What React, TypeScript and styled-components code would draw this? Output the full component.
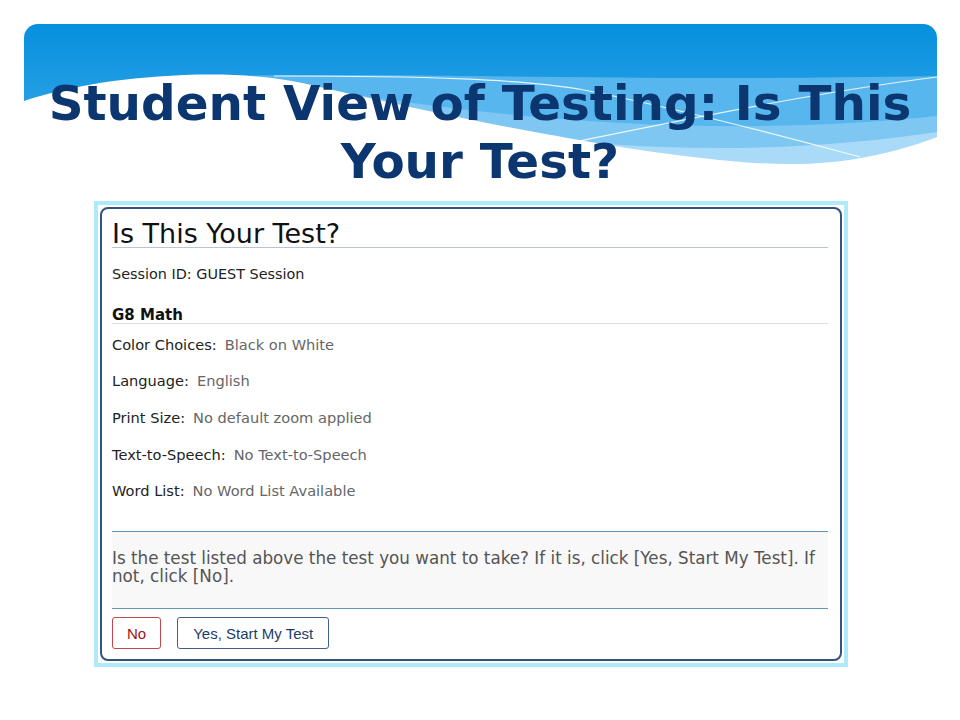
import React from "react";
import styled, { createGlobalStyle } from "styled-components";

const Global = createGlobalStyle`
  html, body { margin: 0; padding: 0; background: #ffffff; }
  body { font-family: "DejaVu Sans", Verdana, sans-serif; }
  * { box-sizing: border-box; }
`;

const Slide = styled.div`
  width: 960px;
  height: 720px;
  overflow: hidden;
  background: #ffffff;
  padding-top: 24px;
`;

const Header = styled.header`
  position: relative;
  height: 166px;
`;

const Banner = styled.svg`
  position: absolute;
  left: 24px;
  top: 0;
  width: 913px;
  height: 141px;
  border-radius: 14px 14px 0 0;
  display: block;
`;

const Title = styled.h1`
  position: relative;
  margin: 0;
  padding-top: 50px;
  font-family: "DejaVu Sans", Verdana, sans-serif;
  font-weight: bold;
  font-size: 48.4px;
  line-height: 58px;
  color: #0b3670;
  text-align: center;
`;

const Frame = styled.section`
  margin: 11px 0 0 94px;
  width: 754px;
  border: 4px solid #aeeafb;
  padding: 2px;
  background: #ffffff;
`;

const Card = styled.div`
  border: 2px solid #33557b;
  border-radius: 8px;
  padding: 11px 12px 10px 10px;
  display: flex;
  flex-direction: column;
`;

const Heading = styled.h2`
  margin: 0;
  font-weight: normal;
  font-size: 27px;
  line-height: 27px;
  color: #111111;
  border-bottom: 1px solid #b9c5d2;
`;

const Session = styled.div`
  margin-top: 17.5px;
  font-size: 14.4px;
  line-height: 17px;
  color: #222222;
`;

const TestName = styled.h3`
  margin: 25px 0 0;
  font-size: 15px;
  line-height: 15px;
  font-weight: bold;
  color: #111111;
  border-bottom: 1px solid #dddddd;
`;

const Settings = styled.dl`
  margin: 12px 0 0;
  display: flex;
  flex-direction: column;
  gap: 19.7px;
`;

const Row = styled.div`
  display: flex;
  font-size: 14.6px;
  line-height: 17px;
`;

const Label = styled.dt`
  margin: 0 8px 0 0;
  color: #222222;
`;

const Value = styled.dd`
  margin: 0;
  color: #666666;
`;

const Notice = styled.p`
  margin: 32px 0 0;
  padding: 16.7px 0 22.5px;
  border-top: 1px solid #6098b6;
  border-bottom: 1px solid #6098b6;
  background: #f8f8f8;
  font-size: 16.75px;
  line-height: 18.4px;
  color: #555555;
`;

const Actions = styled.div`
  margin-top: 8px;
  display: flex;
  gap: 16px;
`;

const Button = styled.button<{ $tone: "no" | "yes" }>`
  height: 32px;
  padding: 0 ${(p) => (p.$tone === "no" ? "14px" : "15px")};
  font-family: "Liberation Sans", Arial, sans-serif;
  font-size: 15px;
  background: #ffffff;
  border-radius: 3px;
  border: 1px solid ${(p) => (p.$tone === "no" ? "#c04848" : "#40608a")};
  color: ${(p) => (p.$tone === "no" ? "#a01010" : "#1c3c6a")};
  cursor: pointer;
`;

const settings: [string, string][] = [
  ["Color Choices:", "Black on White"],
  ["Language:", "English"],
  ["Print Size:", "No default zoom applied"],
  ["Text-to-Speech:", "No Text-to-Speech"],
  ["Word List:", "No Word List Available"],
];

function Waves() {
  return (
    <Banner viewBox="0 0 913 141" preserveAspectRatio="none" aria-hidden="true">
      <defs>
        <linearGradient id="sky" x1="0" y1="0" x2="0" y2="1">
          <stop offset="0" stopColor="#0690dd" />
          <stop offset="1" stopColor="#3fabea" />
        </linearGradient>
      </defs>
      <rect x="0" y="0" width="913" height="141" fill="url(#sky)" />
      <path d="M200,52 C400,48 600,58 913,52 L913,141 L200,141 Z" fill="#58b6ee" />
      <path d="M300,66 C500,98 700,114 913,92 L913,141 L300,141 Z" fill="#7fc7f3" />
      <path d="M480,110 C640,130 780,128 913,108 L913,141 L480,141 Z" fill="#a9dbf8" />
      <path d="M250,52 C400,52 500,55 560,66 C680,90 780,118 836,133" fill="none" stroke="#ffffff" strokeWidth="1.2" opacity="0.85" />
      <path d="M520,124 C640,100 780,70 913,53" fill="none" stroke="#ffffff" strokeWidth="1.2" opacity="0.85" />
      <path
        d="M0,77 C40,64 90,54 160,51 C220,49 260,54 296,63 C380,82 450,97 516,109 C560,117 590,122 616,126 C680,135 730,141 776,140 C830,139 880,126 913,113 L913,141 L0,141 Z"
        fill="#ffffff"
      />
    </Banner>
  );
}

export default function App() {
  return (
    <>
      <Global />
      <Slide>
        <Header>
          <Waves />
          <Title>
            Student View of Testing: Is This
            <br />
            Your Test?
          </Title>
        </Header>
        <Frame>
          <Card>
            <Heading>Is This Your Test?</Heading>
            <Session>Session ID: GUEST Session</Session>
            <TestName>G8 Math</TestName>
            <Settings>
              {settings.map(([k, v]) => (
                <Row key={k}>
                  <Label>{k}</Label>
                  <Value>{v}</Value>
                </Row>
              ))}
            </Settings>
            <Notice>
              Is the test listed above the test you want to take? If it is, click [Yes, Start My Test]. If
              not, click [No].
            </Notice>
            <Actions>
              <Button $tone="no">No</Button>
              <Button $tone="yes">Yes, Start My Test</Button>
            </Actions>
          </Card>
        </Frame>
      </Slide>
    </>
  );
}
